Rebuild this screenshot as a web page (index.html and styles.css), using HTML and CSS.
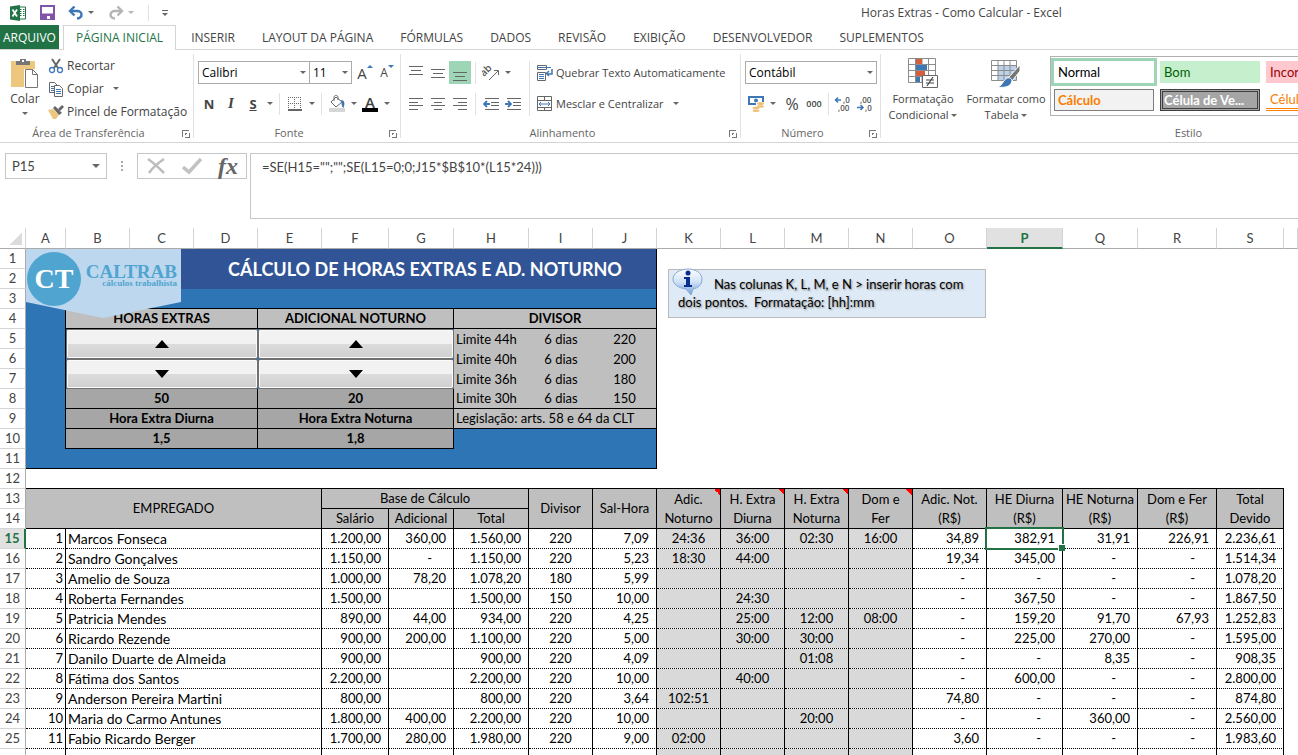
FILE: index.html
```html
<!DOCTYPE html>
<html lang="pt-BR">
<head>
  <meta charset="UTF-8" />
  <meta name="viewport" content="width=device-width, initial-scale=1.0" />
  <title>Horas Extras - Como Calcular - Excel</title>
  <link rel="stylesheet" href="styles.css">
</head>
<body>
  <header class="titlebar">
    <svg class="app-icon" width="16" height="16" viewBox="0 0 16 16" aria-hidden="true">
      <path d="M8 2h7.500v12H8z" fill="#fff" stroke="#217346"/>
      <path d="M10 4.500h1.500M13 4.500h1.500M10 6.500h1.500M13 6.500h1.500M10 8.500h1.500M13 8.500h1.500M10 10.500h1.500M13 10.500h1.500" stroke="#217346"/>
      <path d="M0 1.500 10 0v16L0 14.500z" fill="#217346"/>
      <path d="M2.500 4.500 7 11.500M7 4.500 2.500 11.500" stroke="#fff" stroke-width="1.800"/>
    </svg>
    <button class="qat save" aria-label="Salvar">
      <svg width="15" height="15" viewBox="0 0 15 15"><path d="M1 1h13v13H1z" fill="#fff" stroke="#8054a8" stroke-width="2"/><path d="M1 8.500h13V14H1z" fill="#8054a8"/><path d="M5 11h5v3H5z" fill="#fff"/><path d="M5 11h2v3H5z" fill="#8054a8"/></svg>
    </button>
    <button class="qat undo" aria-label="Desfazer">
      <svg width="16" height="14" viewBox="0 0 16 14"><path d="M2 5h7c6 0 6 7 0 7.500" fill="none" stroke="#3f77b5" stroke-width="2.400"/><path d="M6.500 .5 2 5l4.500 4.500" fill="none" stroke="#3f77b5" stroke-width="2.400"/></svg>
      <i class="caret"></i>
    </button>
    <button class="qat redo" aria-label="Refazer">
      <svg width="16" height="14" viewBox="0 0 16 14"><path d="M14 5H7c-6 0-6 7 0 7.500" fill="none" stroke="#b5b5b5" stroke-width="2.400"/><path d="M9.500 .5 14 5 9.500 9.500" fill="none" stroke="#b5b5b5" stroke-width="2.400"/></svg>
      <i class="caret faded"></i>
    </button>
    <span class="vsep"></span>
    <button class="qat more" aria-label="Personalizar"><i class="bar"></i><i class="caret"></i></button>
    <h1>Horas Extras - Como Calcular - Excel</h1>
  </header>

  <nav class="tabs">
    <a class="file" href="#">ARQUIVO</a>
    <a class="active" href="#">PÁGINA INICIAL</a>
    <a href="#">INSERIR</a>
    <a href="#">LAYOUT DA PÁGINA</a>
    <a href="#">FÓRMULAS</a>
    <a href="#">DADOS</a>
    <a href="#">REVISÃO</a>
    <a href="#">EXIBIÇÃO</a>
    <a href="#">DESENVOLVEDOR</a>
    <a href="#">SUPLEMENTOS</a>
  </nav>

  <section class="ribbon">
    <div class="group clipboard">
      <div class="tools">
        <button class="big paste">
          <svg width="30" height="31" viewBox="0 0 30 31"><path d="M1 3h24v26H1z" fill="#edc77d"/><path d="M6 3h4V1h6v2h4v4H6z" fill="#767676"/><path d="M12 2h2v2h-2z" fill="#fff"/><path d="M14 11h14v19H14z" fill="#fff"/><path d="M15.500 11.500h7l5 5v13h-12zM22.500 11.500v5h5" fill="#fff" stroke="#767676"/></svg>
          <span>Colar</span>
          <i class="caret"></i>
        </button>
        <div class="stack">
          <button class="tool">
            <svg width="16" height="16" viewBox="0 0 16 16"><path d="M4 1l6 9M12 1 6 10" stroke="#666" stroke-width="2"/><circle cx="4" cy="12" r="2.500" fill="none" stroke="#3f77b5" stroke-width="1.300"/><circle cx="12" cy="12" r="2.500" fill="none" stroke="#3f77b5" stroke-width="1.300"/></svg>
            Recortar
          </button>
          <button class="tool">
            <svg width="16" height="16" viewBox="0 0 16 16"><path d="M1.500 1.500h5l3 3v7h-8z" fill="#fff" stroke="#666"/><path d="M3 5.500h3M3 7.500h3M3 9.500h3" stroke="#3f77b5"/><path d="M6.500 4.500h5l3 3v8h-8z" fill="#fff" stroke="#666"/><path d="M8 8.500h5M8 10.500h5M8 12.500h5" stroke="#3f77b5"/></svg>
            Copiar <i class="caret"></i>
          </button>
          <button class="tool">
            <svg width="16" height="16" viewBox="0 0 16 16"><path d="M0 6l5-1 6 6-3 4H5z" fill="#edc77d"/><path d="M5 4l2-2 7 7-3 2z" fill="#666"/><path d="M10 5l4-4 2 2-4 4z" fill="#666"/></svg>
            Pincel de Formatação
          </button>
        </div>
      </div>
      <div class="caption">Área de Transferência<button class="launcher" aria-label="Mais opções de área de transferência"></button></div>
    </div>

    <div class="group font">
      <div class="tools">
        <div class="row">
          <span class="combo face"><select aria-label="Fonte"><option>Calibri</option></select></span>
          <span class="combo size"><select aria-label="Tamanho"><option>11</option></select></span>
          <button class="btn grow" aria-label="Aumentar fonte">A<i class="up"></i></button>
          <button class="btn shrink" aria-label="Diminuir fonte">A<i class="down"></i></button>
        </div>
        <div class="row">
          <button class="btn bold">N</button>
          <button class="btn italic">I</button>
          <button class="btn underline">S</button>
          <button class="drop" aria-label="Opções de sublinhado"><i class="caret"></i></button>
          <span class="vsep"></span>
          <button class="btn" aria-label="Bordas"><svg width="14" height="14" viewBox="0 0 14 14"><path d="M0 .5h14M0 6.500h14M.5 0v13M6.500 0v13M12.500 0v13" stroke="#666" stroke-dasharray="1 1"/><path d="M0 13h14" stroke="#666" stroke-width="2"/></svg></button>
          <button class="drop" aria-label="Opções de bordas"><i class="caret"></i></button>
          <span class="vsep"></span>
          <button class="btn" aria-label="Cor de preenchimento"><svg width="17" height="17" viewBox="0 0 17 17"><path d="M2 7l5-5 6 5-6 5z" fill="#fff" stroke="#666"/><path d="M5 6V2.500c0-3 4-3 4 0V5" fill="none" stroke="#666"/><path d="M12 5c4 0 4 4 2.500 8C12 11 13 8 12 5z" fill="#3f77b5"/><path d="M0 13h16v4H0z" fill="#d6d6d6"/></svg></button>
          <button class="drop" aria-label="Opções de preenchimento"><i class="caret"></i></button>
          <button class="btn color" aria-label="Cor da fonte">A</button>
          <button class="drop" aria-label="Opções de cor"><i class="caret"></i></button>
        </div>
      </div>
      <div class="caption">Fonte<button class="launcher" aria-label="Mais opções de fonte"></button></div>
    </div>

    <div class="group align">
      <div class="tools cols">
        <div class="stack">
          <div class="row">
            <button class="btn" aria-label="Alinhar em cima"><svg width="14" height="16" viewBox="0 0 14 16"><path d="M0 1.500h14M2 5.500h10M0 9.500h14" stroke="#666"/></svg></button>
            <button class="btn" aria-label="Alinhar no meio"><svg width="14" height="16" viewBox="0 0 14 16"><path d="M0 4.500h14M2 8.500h10M0 12.500h14" stroke="#666"/></svg></button>
            <button class="btn on" aria-label="Alinhar embaixo"><svg width="14" height="16" viewBox="0 0 14 16"><path d="M0 7.500h14M2 11.500h10M0 15.500h14" stroke="#666"/></svg></button>
            <span class="vsep"></span>
            <button class="btn" aria-label="Orientação"><svg width="18" height="18" viewBox="0 0 18 18"><text x="1" y="11" transform="rotate(-45 4 11)" font-size="10" font-weight="600" fill="#555">ab</text><path d="M7 16l9-9M12 6.500h4.500V11" fill="none" stroke="#666"/></svg></button>
            <button class="drop" aria-label="Opções de orientação"><i class="caret"></i></button>
          </div>
          <div class="row">
            <button class="btn" aria-label="Alinhar à esquerda"><svg width="14" height="12" viewBox="0 0 14 12"><path d="M0 .5h14M0 4.500h9M0 7.500h14M0 11.500h9" stroke="#666"/></svg></button>
            <button class="btn" aria-label="Centralizar"><svg width="14" height="12" viewBox="0 0 14 12"><path d="M0 .5h14M3 4.500h8M0 7.500h14M3 11.500h8" stroke="#666"/></svg></button>
            <button class="btn" aria-label="Alinhar à direita"><svg width="14" height="12" viewBox="0 0 14 12"><path d="M0 .5h14M5 4.500h9M0 7.500h14M5 11.500h9" stroke="#666"/></svg></button>
            <span class="vsep"></span>
            <button class="btn" aria-label="Diminuir recuo"><svg width="16" height="12" viewBox="0 0 16 12"><path d="M2 .5h14M8 4.500h8M8 7.500h8M2 11.500h14" stroke="#666"/><path d="M7 6H1M4 3 1 6l3 3" fill="none" stroke="#3f77b5" stroke-width="1.800"/></svg></button>
            <button class="btn" aria-label="Aumentar recuo"><svg width="16" height="12" viewBox="0 0 16 12"><path d="M2 .5h14M8 4.500h8M8 7.500h8M2 11.500h14" stroke="#666"/><path d="M0 6h6M3 3l3 3-3 3" fill="none" stroke="#3f77b5" stroke-width="1.800"/></svg></button>
          </div>
        </div>
        <span class="vsep tall"></span>
        <div class="stack wide">
          <button class="tool">
            <svg width="16" height="16" viewBox="0 0 16 16"><path d="M.5 .5h9v4h-9z" fill="#fff" stroke="#666"/><path d="M0 2.500h14" stroke="#3f77b5"/><path d="M.5 7.500h8v8h-8z" fill="#fff" stroke="#666"/><path d="M2 9.500h5M2 11.500h5M2 13.500h5" stroke="#3f77b5"/><path d="M15 4v5h-5M12 6 9.500 8.500 12 11" fill="none" stroke="#3f77b5" stroke-width="1.500"/></svg>
            Quebrar Texto Automaticamente
          </button>
          <button class="tool">
            <svg width="16" height="16" viewBox="0 0 16 16"><path d="M.5 .5h14v14H.5zM.5 4.500h14M.5 11.500h14M7.500 .5v4M7.500 11.500v3" fill="#fff" stroke="#666"/><path d="M2 8h11M4 6 2 8l2 2M11 6l2 2-2 2" fill="none" stroke="#3f77b5"/></svg>
            Mesclar e Centralizar <i class="caret"></i>
          </button>
        </div>
      </div>
      <div class="caption">Alinhamento<button class="launcher" aria-label="Mais opções de alinhamento"></button></div>
    </div>

    <div class="group number">
      <div class="tools">
        <div class="row">
          <span class="combo format"><select aria-label="Formato de número"><option>Contábil</option></select></span>
        </div>
        <div class="row">
          <button class="btn" aria-label="Formato de contabilização"><svg width="17" height="16" viewBox="0 0 17 16"><path d="M1 1h14v7H1z" fill="#fff" stroke="#3f77b5" stroke-width="2"/><circle cx="8" cy="4.500" r="2" fill="#3f77b5"/><path d="M8 6h8v9H5v-4h3z" fill="#fff"/><ellipse cx="12.500" cy="7.500" rx="3.500" ry="1.500" fill="#edc077"/><ellipse cx="12.500" cy="10.500" rx="3.500" ry="1.200" fill="#edc077"/><ellipse cx="8" cy="12" rx="3.500" ry="1.200" fill="#edc077"/><ellipse cx="8" cy="14.700" rx="3.500" ry="1.200" fill="#edc077"/></svg></button>
          <button class="drop" aria-label="Opções de moeda"><i class="caret"></i></button>
          <button class="btn percent">%</button>
          <button class="btn thousand">000</button>
          <span class="vsep"></span>
          <button class="btn" aria-label="Aumentar casas decimais"><svg class="decimals" width="18" height="18" viewBox="0 0 18 18"><text x="9" y="8">,0</text><text x="4" y="16">,00</text><path d="M7 5H1.500M4 2.500 1.500 5 4 7.500" fill="none" stroke="#3f77b5" stroke-width="1.500"/></svg></button>
          <button class="btn" aria-label="Diminuir casas decimais"><svg class="decimals" width="18" height="18" viewBox="0 0 18 18"><text x="4" y="8">,00</text><text x="9" y="16">,0</text><path d="M1 12.500h6M4.500 10 7 12.500 4.500 15" fill="none" stroke="#3f77b5" stroke-width="1.500"/></svg></button>
        </div>
      </div>
      <div class="caption">Número<button class="launcher" aria-label="Mais opções de número"></button></div>
    </div>

    <div class="group styles">
      <div class="tools cols">
        <button class="big conditional">
          <svg width="30" height="31" viewBox="0 0 30 31"><path d="M.5 .5h27v24H.5zM.5 6.500h27M.5 12.500h27M.5 18.500h27M7.500 .5v24M20.500 .5v24M14 .5v24" fill="#fff" stroke="#8c8c8c"/><path d="M8 1h6v5H8zM8 13h9v5H8z" fill="#d35f3d"/><path d="M8 7h11v5H8zM8 19h4v5H8z" fill="#3f77b5"/><path d="M14.500 17.500h15v12h-15z" fill="#fff" stroke="#666"/><path d="M18 22h8M18 25h8M25 19l-6 9" stroke="#444" stroke-width="1.200"/></svg>
          <span>Formatação<br>Condicional <i class="caret"></i></span>
        </button>
        <button class="big astable">
          <svg width="30" height="31" viewBox="0 0 30 31"><path d="M1 3h24v20H1z" fill="#fff"/><path d="M7 8h18v15H7z" fill="#bcd2ea"/><path d="M.5 2.500h25v20H.5zM.5 7.500h25M.5 12.500h25M.5 17.500h25M7 2.500v20M13 2.500v20M19 2.500v20" fill="none" stroke="#8c8c8c"/><path d="M29 7v6l-8 10-4-3z" fill="#767676" stroke="#fff"/><path d="M16 20c3-1 5 1 5 3-1 6-8 7-14 6 5-2 5-7 9-9z" fill="#3f77b5" stroke="#fff"/></svg>
          <span>Formatar como<br>Tabela <i class="caret"></i></span>
        </button>
        <div class="gallery">
          <button class="st normal">Normal</button>
          <button class="st good">Bom</button>
          <button class="st bad">Incorreto</button>
          <button class="st calc">Cálculo</button>
          <button class="st check">Célula de Ve...</button>
          <button class="st linked">Célula Vincul...</button>
        </div>
      </div>
      <div class="caption">Estilo</div>
    </div>
  </section>

  <section class="formula-bar">
    <div class="namebox">
      <input type="text" value="P15" aria-label="Caixa de nome">
      <button aria-label="Abrir lista de nomes"><i class="caret"></i></button>
    </div>
    <span class="grip"><i></i><i></i><i></i></span>
    <div class="fx-tools">
      <button aria-label="Cancelar"><svg width="20" height="18" viewBox="0 0 20 18"><path d="M2 2c6 4 10 8 16 14M18 2C12 6 7 10 3 16" fill="none" stroke="#bdbdbd" stroke-width="2.500"/></svg></button>
      <button aria-label="Inserir"><svg width="20" height="18" viewBox="0 0 20 18"><path d="M1 10l6 5L19 2" fill="none" stroke="#c2c2c2" stroke-width="3.500"/></svg></button>
      <button class="fx" aria-label="Inserir função">fx</button>
    </div>
    <textarea aria-label="Barra de fórmulas" spellcheck="false">=SE(H15="";"";SE(L15=0;0;J15*$B$10*(L15*24)))</textarea>
  </section>

  <main class="sheet">
    <table>
      <colgroup>
        <col class="w26"><col class="w40"><col class="w64"><col class="w64"><col class="w64"><col class="w64">
        <col class="w67"><col class="w65"><col class="w75"><col class="w64"><col class="w64">
        <col class="w64"><col class="w64"><col class="w64"><col class="w64">
        <col class="w74"><col class="w76"><col class="w75"><col class="w79"><col class="w67"><col>
      </colgroup>
      <thead>
        <tr><th class="corner"></th><th>A</th><th>B</th><th>C</th><th>D</th><th>E</th><th>F</th><th>G</th><th>H</th><th>I</th><th>J</th><th>K</th><th>L</th><th>M</th><th>N</th><th>O</th><th class="sel">P</th><th>Q</th><th>R</th><th>S</th><th></th></tr>
      </thead>
      <tbody class="panel">
        <tr>
          <th>1</th>
          <td class="title" colspan="3" rowspan="2">
            <svg class="logo" width="155" height="70" viewBox="0 0 155 70" role="img" aria-label="Caltrab cálculos trabalhista">
              <path d="M0 0h155v53L77 69 0 53z" fill="#bdd7ee"/>
              <circle cx="28" cy="30" r="27" fill="#50a5d0"/>
              <text class="mark" x="28" y="39">CT</text>
              <text class="brand" x="151" y="29">CALTRAB</text>
              <text class="slogan" x="151" y="37">cálculos trabalhista</text>
            </svg>
          </td>
          <td class="title edge" colspan="7" rowspan="2">CÁLCULO DE HORAS EXTRAS E AD. NOTURNO</td>
          <td class="free" colspan="10" rowspan="11">
            <aside class="note">
              <svg width="32" height="28" viewBox="0 0 32 28" aria-hidden="true">
                <defs><linearGradient id="bubble" x1="0" y1="0" x2="0" y2="1"><stop offset="0" stop-color="#fff"/><stop offset="0.500" stop-color="#cfe2f7"/><stop offset="1" stop-color="#6f9fd8"/></linearGradient></defs>
                <path d="M16 1c9 0 14 5 14 10 0 6-4 9-9 10l-2 6-5-6C6 20 1 16 1 11 1 6 7 1 16 1z" fill="url(#bubble)" stroke="#89a9d2"/>
                <circle cx="16" cy="5" r="2.500" fill="#0b2e91"/>
                <path d="M12 9h6v8h2v2h-8v-2h2v-6h-2z" fill="#0b2e91"/>
              </svg>
              <p>Nas colunas K, L, M, e N &gt; inserir horas com dois pontos.&nbsp; Formatação: [hh]:mm</p>
            </aside>
          </td>
        </tr>
        <tr><th>2</th></tr>
        <tr><th>3</th><td></td><td class="line edge" colspan="9"></td></tr>
        <tr><th>4</th><td class="edge"></td><td class="head" colspan="3">HORAS EXTRAS</td><td class="head" colspan="3">ADICIONAL NOTURNO</td><td class="head" colspan="3">DIVISOR</td></tr>
        <tr>
          <th>5</th><td class="edge"></td>
          <td class="spin" colspan="3" rowspan="3"><button aria-label="Aumentar hora extra"><i class="tri up"></i></button><button aria-label="Diminuir hora extra"><i class="tri down"></i></button></td>
          <td class="spin" colspan="3" rowspan="3"><button aria-label="Aumentar adicional"><i class="tri up"></i></button><button aria-label="Diminuir adicional"><i class="tri down"></i></button></td>
          <td class="lim">Limite 44h</td><td class="lim mid">6 dias</td><td class="lim mid edge">220</td>
        </tr>
        <tr><th>6</th><td class="edge"></td><td class="lim">Limite 40h</td><td class="lim mid">6 dias</td><td class="lim mid edge">200</td></tr>
        <tr><th>7</th><td class="edge"></td><td class="lim">Limite 36h</td><td class="lim mid">6 dias</td><td class="lim mid edge">180</td></tr>
        <tr><th>8</th><td class="edge"></td><td class="val" colspan="3">50</td><td class="val" colspan="3">20</td><td class="lim line">Limite 30h</td><td class="lim mid line">6 dias</td><td class="lim mid line edge">150</td></tr>
        <tr><th>9</th><td class="edge"></td><td class="val" colspan="3">Hora Extra Diurna</td><td class="val" colspan="3">Hora Extra Noturna</td><td class="lim line edge" colspan="3">Legislação: arts. 58 e 64 da CLT</td></tr>
        <tr><th>10</th><td class="edge"></td><td class="val" colspan="3">1,5</td><td class="val" colspan="3">1,8</td><td class="edge" colspan="3"></td></tr>
        <tr><th>11</th><td class="line edge" colspan="10"></td></tr>
      </tbody>
      <tbody class="heads">
        <tr><th>12</th><td class="gap" colspan="19"></td><td class="free"></td></tr>
        <tr>
          <th>13</th>
          <td colspan="5" rowspan="2">EMPREGADO</td><td colspan="3">Base de Cálculo</td>
          <td rowspan="2">Divisor</td><td rowspan="2">Sal-Hora</td>
          <td class="memo" rowspan="2">Adic.<br>Noturno</td><td class="memo" rowspan="2">H. Extra<br>Diurna</td><td class="memo" rowspan="2">H. Extra<br>Noturna</td><td class="memo" rowspan="2">Dom e<br>Fer</td>
          <td rowspan="2">Adic. Not.<br>(R$)</td><td rowspan="2">HE Diurna<br>(R$)</td><td rowspan="2">HE Noturna<br>(R$)</td><td rowspan="2">Dom e Fer<br>(R$)</td><td rowspan="2">Total<br>Devido</td>
          <td class="free" rowspan="2"></td>
        </tr>
        <tr><th>14</th><td>Salário</td><td>Adicional</td><td>Total</td></tr>
      </tbody>
      <tbody class="data">
        <tr><th class="sel">15</th><td>1</td><td colspan="4">Marcos Fonseca</td><td>1.200,00</td><td>360,00</td><td>1.560,00</td><td>220</td><td>7,09</td><td>24:36</td><td>36:00</td><td>02:30</td><td>16:00</td><td>34,89</td><td class="cursor">382,91</td><td>31,91</td><td>226,91</td><td>2.236,61</td><td></td></tr>
        <tr><th>16</th><td>2</td><td colspan="4">Sandro Gonçalves</td><td>1.150,00</td><td class="nil">-</td><td>1.150,00</td><td>220</td><td>5,23</td><td>18:30</td><td>44:00</td><td></td><td></td><td>19,34</td><td>345,00</td><td class="nil">-</td><td class="nil">-</td><td>1.514,34</td><td></td></tr>
        <tr><th>17</th><td>3</td><td colspan="4">Amelio de Souza</td><td>1.000,00</td><td>78,20</td><td>1.078,20</td><td>180</td><td>5,99</td><td></td><td></td><td></td><td></td><td class="nil">-</td><td class="nil">-</td><td class="nil">-</td><td class="nil">-</td><td>1.078,20</td><td></td></tr>
        <tr><th>18</th><td>4</td><td colspan="4">Roberta Fernandes</td><td>1.500,00</td><td></td><td>1.500,00</td><td>150</td><td>10,00</td><td></td><td>24:30</td><td></td><td></td><td class="nil">-</td><td>367,50</td><td class="nil">-</td><td class="nil">-</td><td>1.867,50</td><td></td></tr>
        <tr><th>19</th><td>5</td><td colspan="4">Patricia Mendes</td><td>890,00</td><td>44,00</td><td>934,00</td><td>220</td><td>4,25</td><td></td><td>25:00</td><td>12:00</td><td>08:00</td><td class="nil">-</td><td>159,20</td><td>91,70</td><td>67,93</td><td>1.252,83</td><td></td></tr>
        <tr><th>20</th><td>6</td><td colspan="4">Ricardo Rezende</td><td>900,00</td><td>200,00</td><td>1.100,00</td><td>220</td><td>5,00</td><td></td><td>30:00</td><td>30:00</td><td></td><td class="nil">-</td><td>225,00</td><td>270,00</td><td class="nil">-</td><td>1.595,00</td><td></td></tr>
        <tr><th>21</th><td>7</td><td colspan="4">Danilo Duarte de Almeida</td><td>900,00</td><td></td><td>900,00</td><td>220</td><td>4,09</td><td></td><td></td><td>01:08</td><td></td><td class="nil">-</td><td class="nil">-</td><td>8,35</td><td class="nil">-</td><td>908,35</td><td></td></tr>
        <tr><th>22</th><td>8</td><td colspan="4">Fátima dos Santos</td><td>2.200,00</td><td></td><td>2.200,00</td><td>220</td><td>10,00</td><td></td><td>40:00</td><td></td><td></td><td class="nil">-</td><td>600,00</td><td class="nil">-</td><td class="nil">-</td><td>2.800,00</td><td></td></tr>
        <tr><th>23</th><td>9</td><td colspan="4">Anderson Pereira Martini</td><td>800,00</td><td></td><td>800,00</td><td>220</td><td>3,64</td><td>102:51</td><td></td><td></td><td></td><td>74,80</td><td class="nil">-</td><td class="nil">-</td><td class="nil">-</td><td>874,80</td><td></td></tr>
        <tr><th>24</th><td>10</td><td colspan="4">Maria do Carmo Antunes</td><td>1.800,00</td><td>400,00</td><td>2.200,00</td><td>220</td><td>10,00</td><td></td><td></td><td>20:00</td><td></td><td class="nil">-</td><td class="nil">-</td><td>360,00</td><td class="nil">-</td><td>2.560,00</td><td></td></tr>
        <tr><th>25</th><td>11</td><td colspan="4">Fabio Ricardo Berger</td><td>1.700,00</td><td>280,00</td><td>1.980,00</td><td>220</td><td>9,00</td><td>02:00</td><td></td><td></td><td></td><td>3,60</td><td class="nil">-</td><td class="nil">-</td><td class="nil">-</td><td>1.983,60</td><td></td></tr>
        <tr><th></th><td></td><td colspan="4"></td><td></td><td></td><td></td><td></td><td></td><td></td><td></td><td></td><td></td><td></td><td></td><td></td><td></td><td></td><td></td></tr>
      </tbody>
    </table>
  </main>
</body>
</html>
```
FILE: styles.css
```css
:root {
  --ui: "Open Sans", "Noto Sans", sans-serif;
  --cell: Lato, sans-serif;
  --ink: #444;
  --green: #217346;
  --mint: #9fd5b7;
  --rule: #d4d4d4;
  --blue: #2e75b6;
  --navy: #305496;
  --grey: #bfbfbf;
}

* { box-sizing: border-box; }

body {
  margin: 0;
  height: 100vh;
  display: flex;
  flex-direction: column;
  overflow: hidden;
  background: #fff;
  color: var(--ink);
  font-family: var(--ui);
  font-size: 12px;
}

button {
  display: inline-flex;
  align-items: center;
  justify-content: center;
  margin: 0;
  padding: 0;
  border: 0;
  background: none;
  color: inherit;
  font: inherit;
  white-space: nowrap;
}

svg { display: block; flex: none; }

.caret {
  flex: none;
  display: inline-block;
  border: 3px solid transparent;
  border-top-color: #666;
  border-bottom-width: 0;
}

.caret.faded { border-top-color: #b5b5b5; }

.vsep {
  flex: none;
  width: 1px;
  height: 22px;
  background: #e1e1e1;
}

/* title bar */

.titlebar {
  flex: none;
  display: flex;
  align-items: center;
  height: 25px;
  padding-left: 10px;
}

.titlebar .vsep { height: 16px; margin-left: 14px; }

.save { margin-left: 14px; }

.undo { margin-left: 13px; gap: 4px; }

.redo { margin-left: 14px; gap: 4px; }

.more {
  flex-direction: column;
  gap: 2px;
  width: 8px;
  margin-left: 12px;
}

.more .bar { width: 6px; height: 1px; background: #666; }

h1 {
  flex: 1;
  margin: 0;
  padding-left: 692px;
  font-size: 12px;
  font-weight: normal;
  white-space: nowrap;
}

/* tabs */

.tabs {
  flex: none;
  display: flex;
  gap: 27px;
  height: 25px;
  border-bottom: 1px solid var(--rule);
  line-height: 25px;
}

.tabs a {
  color: var(--ink);
  text-decoration: none;
  white-space: nowrap;
}

.tabs .file {
  width: 59px;
  margin-right: -23px;
  background: var(--green);
  color: #fff;
  text-align: center;
}

.tabs .active {
  height: 25px;
  margin-right: -12px;
  padding: 0 12px;
  border: 1px solid var(--rule);
  border-bottom: 0;
  background: #fff;
  color: var(--green);
  line-height: 24px;
}

/* ribbon */

.ribbon {
  flex: none;
  display: flex;
  height: 93px;
  overflow: hidden;
  border-bottom: 1px solid var(--rule);
}

.group {
  flex: none;
  display: flex;
  flex-direction: column;
  justify-content: space-between;
  margin: 4px 0;
  border-right: 1px solid #e1e1e1;
}

.clipboard { width: 194px; }
.font { width: 207px; }
.align { width: 340px; }
.number { width: 140px; }
.styles { width: 616px; }

.caption {
  display: flex;
  justify-content: center;
  position: relative;
  padding-right: 16px;
  color: #666;
  font-size: 11px;
  line-height: 10px;
}

.styles .caption { padding-right: 0; }

.launcher {
  position: absolute;
  right: 4px;
  bottom: 1px;
  width: 7px;
  height: 7px;
  border: 1px solid #777;
  border-right: 0;
  border-bottom: 0;
}

.launcher::after {
  content: "";
  flex: none;
  width: 4px;
  height: 4px;
  margin: 3px 0 0 3px;
  border: 1px solid #777;
  border-top: 0;
  border-left: 0;
  background: linear-gradient(135deg, #777 30%, #fff 30%);
}

.tools { display: flex; }

.row { display: flex; align-items: center; height: 23px; }

.stack { display: flex; flex-direction: column; }

.tool {
  justify-content: flex-start;
  gap: 3px;
  height: 23px;
  font-size: 11px;
}

.clipboard .tool { font-size: 12px; }

.tool .caret { margin-left: 6px; }

.big {
  flex-direction: column;
  justify-content: flex-start;
  line-height: 16px;
}

.big .caret { vertical-align: 2px; }

.paste { width: 38px; margin: 4px 0 0 6px; }
.paste span { margin: 2px 0 5px; }

.clipboard .stack { margin-left: 4px; }

.font .tools,
.number .tools {
  flex-direction: column;
  gap: 8px;
  padding: 7px 0 0 4px;
}

.combo {
  position: relative;
  height: 23px;
}

.combo select {
  appearance: none;
  display: block;
  width: 100%;
  height: 23px;
  padding: 0 3px;
  border: 1px solid #ababab;
  border-radius: 0;
  background: #fff;
  color: #000;
  font: inherit;
}

.combo::after {
  content: "";
  position: absolute;
  top: 10px;
  right: 4px;
  border: 3px solid transparent;
  border-top-color: #666;
  border-bottom-width: 0;
}

.face { width: 112px; }
.size { width: 43px; margin-left: -1px; }
.format { width: 132px; }

.btn { width: 22px; height: 23px; }
.btn.on { background: var(--mint); }
.drop { width: 11px; height: 22px; }

.font .vsep { margin: 0 4px; }

.grow { margin-left: 2px; font-size: 15px; }
.shrink { font-size: 12px; }

.grow i, .shrink i {
  align-self: flex-start;
  margin-top: 4px;
  border: 3px solid transparent;
}

.grow i { border-bottom: 3px solid #3f77b5; border-top: 0; }
.shrink i { border-top: 3px solid #3f77b5; border-bottom: 0; }

.bold { font-size: 13px; font-weight: bold; }
.italic { font-family: "Liberation Serif", serif; font-size: 15px; font-style: italic; font-weight: bold; }
.underline { font-size: 13px; font-weight: bold; text-decoration: underline; }

.color {
  height: 17px;
  width: 16px;
  margin: 0 3px;
  border-bottom: 4px solid #000;
  font-size: 15px;
  font-weight: 600;
  line-height: 14px;
}

.align .cols { padding: 7px 0 0 4px; }
.align .stack { gap: 8px; width: 124px; }
.align .stack .vsep { margin: 0 4px; }
.align .tall { height: 55px; }
.align .wide { width: auto; margin-left: 7px; }

.percent { margin-left: 3px; font-size: 16px; }
.thousand { font-size: 9px; font-weight: 600; }
.number .vsep { margin: 0 3px; }

.decimals { fill: #555; font-size: 8px; font-weight: 600; }

.conditional { width: 84px; margin-top: 4px; }
.astable { width: 82px; margin-top: 4px; }
.big svg + span { margin-top: 2px; }
.styles .big { font-size: 11px; }

.gallery {
  display: grid;
  grid-template-columns: 100px 100px 100px;
  gap: 6px;
  width: 430px;
  height: 60px;
  margin: 2px 0 0 3px;
  padding: 4px 3px;
  border: 1px solid #b1b1b1;
}

.st {
  justify-content: flex-start;
  height: 22px;
  padding-left: 4px;
  overflow: hidden;
  font-family: var(--cell);
  font-size: 13px;
}

.normal { outline: 3px solid var(--mint); color: #000; }
.good { background: #c6efce; color: #006100; }
.bad { background: #ffc7ce; color: #9c0006; }
.calc { border: 1px solid #7f7f7f; padding-left: 3px; background: #f2f2f2; color: #fa7d00; font-weight: bold; }
.check { border: 3px double #3f3f3f; padding-left: 1px; background: #a5a5a5; color: #fff; font-weight: bold; }
.linked { border-bottom: 3px double #ff8001; color: #fa7d00; }

/* formula bar */

.formula-bar {
  flex: none;
  display: flex;
  align-items: flex-start;
  padding: 10px 0 9px 5px;
}

.namebox {
  display: flex;
  width: 102px;
  height: 26px;
  border: 1px solid #c6c6c6;
}

.namebox input {
  flex: 1;
  min-width: 0;
  padding: 0 6px;
  border: 0;
  color: var(--ink);
  font: 13px var(--cell);
}

.namebox button { width: 20px; }
.namebox .caret { border-width: 4px 4px 0; }

.grip {
  display: flex;
  flex-direction: column;
  align-items: center;
  justify-content: center;
  gap: 2px;
  width: 30px;
  height: 26px;
}

.grip i { width: 2px; height: 2px; background: #aaa; }

.fx-tools {
  display: flex;
  align-items: center;
  width: 110px;
  height: 26px;
  border: 1px solid #c6c6c6;
}

.fx-tools button { flex: 1; }

.fx-tools .fx {
  color: #666;
  font-family: "Liberation Serif", serif;
  font-size: 24px;
  font-style: italic;
  font-weight: bold;
  line-height: 24px;
}

textarea {
  flex: 1;
  height: 66px;
  margin-left: 3px;
  padding: 5px 11px;
  resize: none;
  border: 1px solid #c6c6c6;
  border-right: 0;
  color: var(--ink);
  font: 13px/17px var(--cell);
}

/* sheet */

.sheet {
  flex: 1;
  min-height: 0;
  overflow: hidden;
}

table {
  width: 100%;
  table-layout: fixed;
  border-collapse: separate;
  border-spacing: 0;
  color: #000;
  font-family: var(--cell);
  font-size: 13px;
  line-height: 19px;
}

.w26 { width: 26px; }
.w40 { width: 40px; }
.w64 { width: 64px; }
.w65 { width: 65px; }
.w67 { width: 67px; }
.w74 { width: 74px; }
.w75 { width: 75px; }
.w76 { width: 76px; }
.w79 { width: 79px; }

tr { height: 20px; }

th, td {
  height: 20px;
  padding: 0;
  white-space: nowrap;
}

th {
  border-right: 1px solid #ababab;
  border-bottom: 1px solid var(--rule);
  color: var(--ink);
  font-weight: normal;
}

thead th {
  height: 21px;
  border-right-color: var(--rule);
  border-bottom-color: #ababab;
}

.sel {
  background: #e1e1e1;
  color: var(--green);
  font-weight: bold;
}

tbody .sel { border-right: 2px solid var(--green); }

thead .sel {
  border-bottom: 2px solid var(--green);
  line-height: 18px;
}

.corner {
  background: linear-gradient(135deg, #fff 50%, #dcdcdc 50%) 10px 5px / 12px 12px no-repeat;
}

/* calculation panel */

.panel td { background: var(--blue); }

.panel .title {
  position: relative;
  background: var(--navy);
  color: #fff;
  font-size: 18px;
  font-weight: bold;
  text-align: center;
}

.logo {
  position: absolute;
  z-index: 1;
  top: 0;
  left: 0;
  font-family: "Liberation Serif", serif;
  font-weight: bold;
}

.mark { fill: #fff; font-size: 28px; text-anchor: middle; }
.brand { fill: #50a5d0; font-size: 19px; text-anchor: end; }
.slogan { fill: #50a5d0; font-size: 9px; text-anchor: end; }

.panel .edge { border-right: 1px solid #000; }
.panel .line { border-bottom: 1px solid #000; }

.panel .head,
.panel .val {
  border-right: 1px solid #000;
  border-bottom: 1px solid #000;
  background: var(--grey);
  font-weight: bold;
  text-align: center;
}

.panel .val { background: #a6a6a6; }

.panel .lim { padding-left: 2px; background: var(--grey); }
.panel .mid { padding: 0; text-align: center; }

.spin button {
  display: flex;
  width: 100%;
  height: 30px;
  border: 1px solid #707070;
  border-radius: 2px;
  background: linear-gradient(#f2f2f2 50%, #dcdcdc 50%, #cfcfcf);
  box-shadow: inset 0 0 0 1px #fafafa;
}

.tri { border: 7px solid transparent; }
.tri.up { border-top: 0; border-bottom: 8px solid #000; }
.tri.down { border-bottom: 0; border-top: 8px solid #000; }

.panel .free {
  position: relative;
  background: #fff;
}

.note {
  position: absolute;
  top: 20px;
  left: 11px;
  width: 318px;
  height: 49px;
  border: 1px solid #b9b9b9;
  background: #deeaf6;
}

.note svg { position: absolute; top: -2px; left: 3px; }

.note p {
  margin: 5px 9px;
  text-indent: 36px;
  text-shadow: 1px 1px 2px #888;
  line-height: 18px;
  white-space: normal;
}

/* employees */

.heads td {
  border-right: 1px solid #000;
  border-bottom: 1px solid #000;
  background: var(--grey);
  text-align: center;
}

.heads .gap { border-right: 0; background: none; }
.heads .free { border: 0; background: none; }

.heads .memo {
  background: linear-gradient(45deg, transparent 50%, #f00 50%) top right / 6px 6px no-repeat var(--grey);
}

.data td {
  border-right: 1px solid #000;
  border-bottom: 1px dotted #000;
  padding-right: 7px;
  text-align: right;
}

.data td:nth-child(2) { padding-right: 2px; }

.data td:nth-child(3) {
  padding-left: 2px;
  font-size: 14px;
  text-align: left;
}

.data td:nth-child(7) { text-align: center; padding: 0; }

.data td:nth-child(n+9):nth-child(-n+12) {
  padding: 0;
  background: #d9d9d9;
  background-clip: padding-box;
  text-align: center;
}

.data td:last-child { border: 0; }

.data .nil { padding-right: 21px; }

.data .cursor { position: relative; }

.cursor::before {
  content: "";
  position: absolute;
  inset: -2px;
  border: 2px solid var(--green);
}

.cursor::after {
  content: "";
  position: absolute;
  right: -3px;
  bottom: -3px;
  width: 6px;
  height: 6px;
  border: 1px solid #fff;
  border-right: 0;
  border-bottom: 0;
  background: var(--green);
}
```
